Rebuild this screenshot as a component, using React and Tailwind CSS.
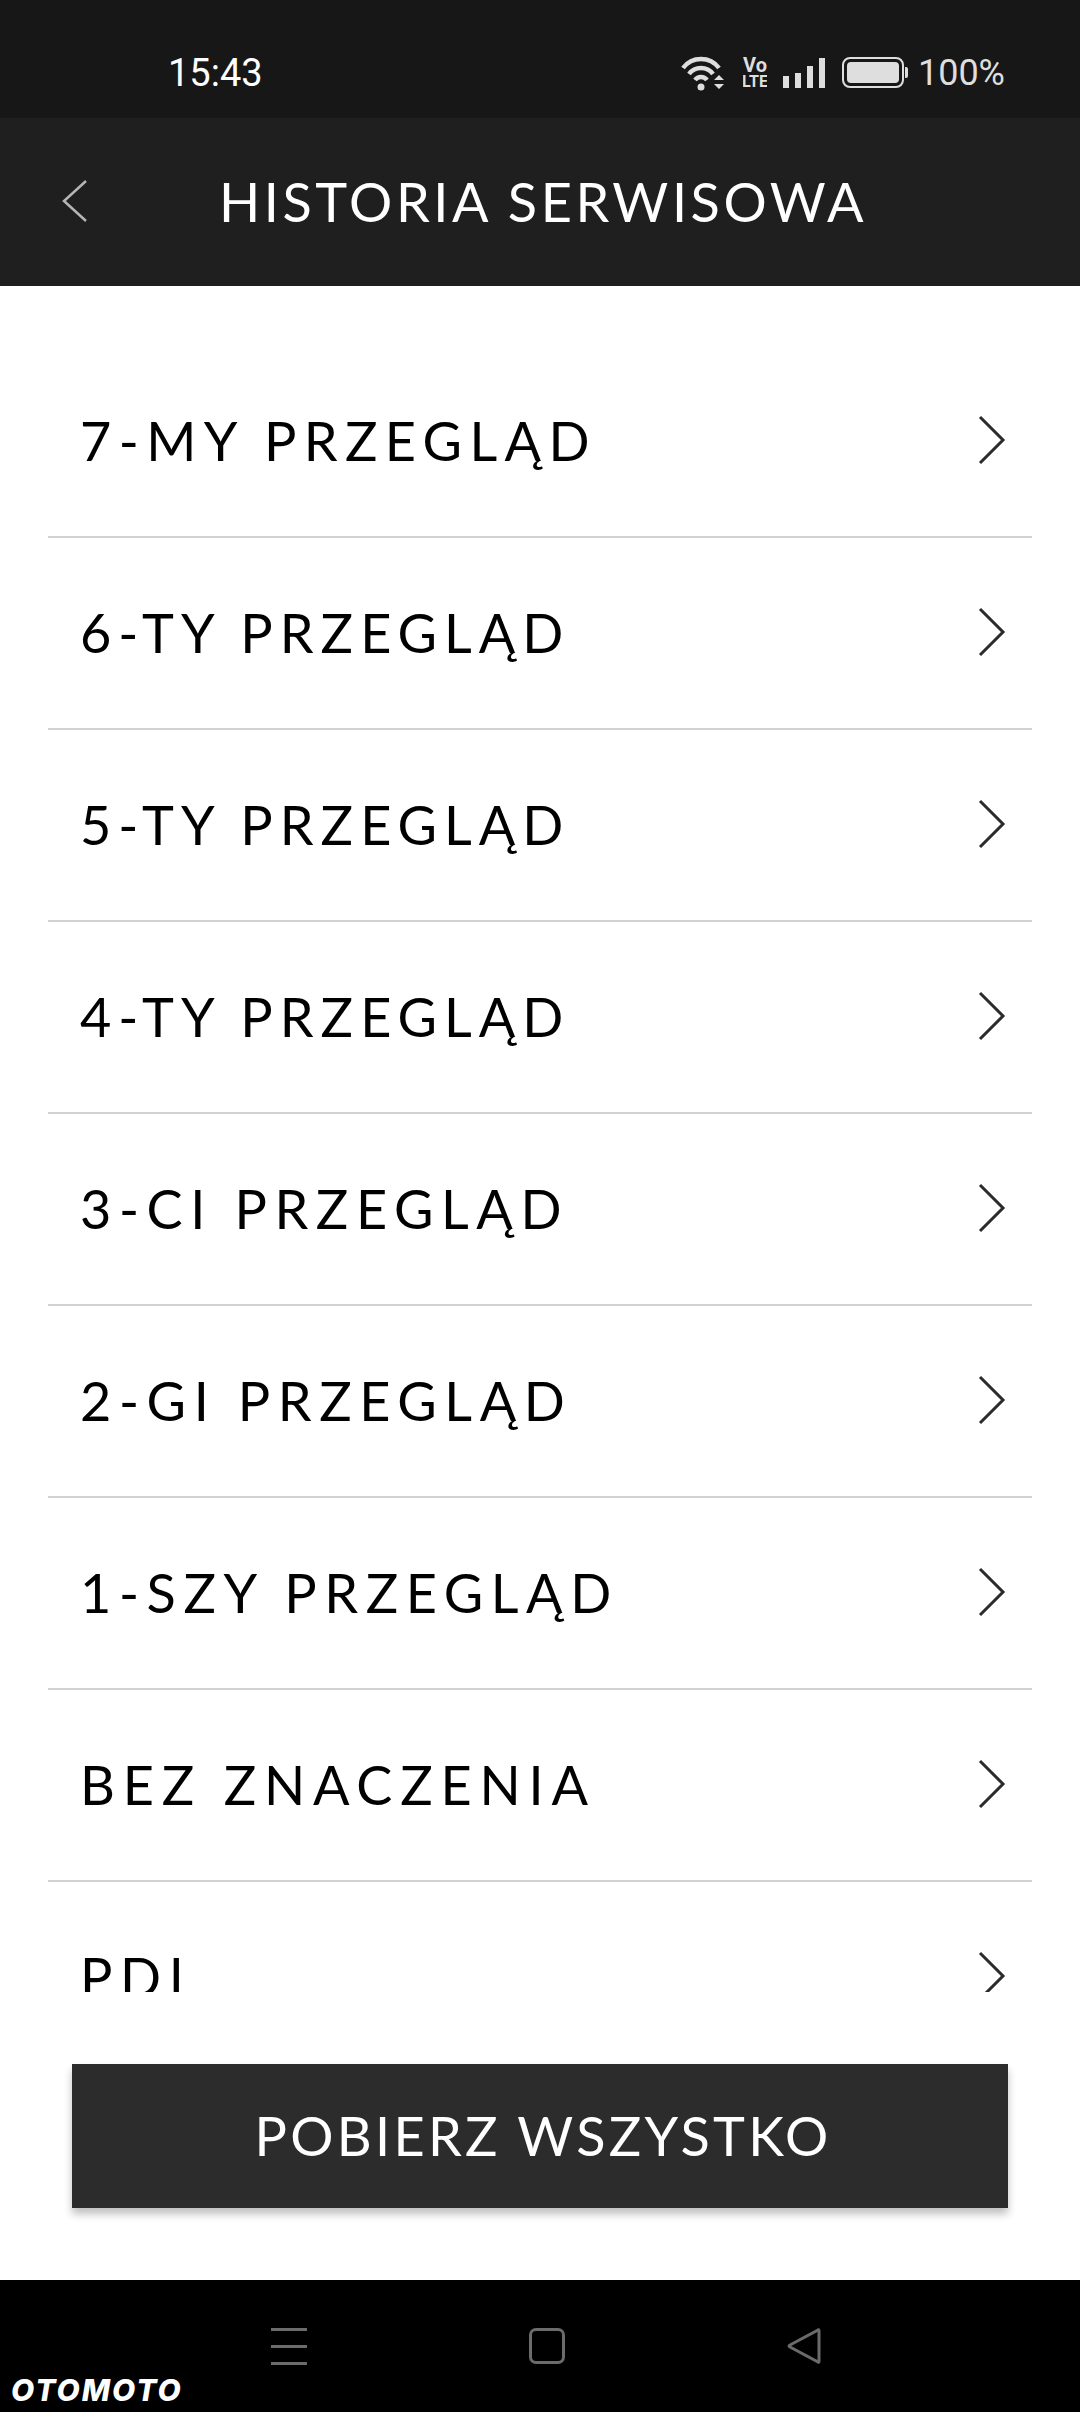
import React from "react";

const rows = [
    { label: "7-MY PRZEGLĄD", tracking: "tracking-[7.4px]" },
    { label: "6-TY PRZEGLĄD", tracking: "tracking-[7px]" },
    { label: "5-TY PRZEGLĄD", tracking: "tracking-[7px]" },
    { label: "4-TY PRZEGLĄD", tracking: "tracking-[7px]" },
    { label: "3-CI PRZEGLĄD", tracking: "tracking-[7.6px]" },
    { label: "2-GI PRZEGLĄD", tracking: "tracking-[7.6px]" },
    { label: "1-SZY PRZEGLĄD", tracking: "tracking-[7.6px]" },
    { label: "BEZ ZNACZENIA", tracking: "tracking-[7.8px]" },
    { label: "PDI", tracking: "tracking-[7.6px]" },
];

function Chevron() {
    return (
        <svg width="28" height="50" viewBox="0 0 28 50" fill="none" className="shrink-0 mb-[2px]">
            <path d="M2 2 L25 25 L2 48" stroke="#2b2b2b" strokeWidth="3" />
        </svg>
    );
}

function StatusIcons() {
    return (
        <div className="flex items-center text-[#dedede]">
            {/* wifi */}
            <svg width="44" height="36" viewBox="0 0 44 36" fill="none" className="mr-[18px]">
                <path d="M2 13 C11 1 29 1 38 13" stroke="#dedede" strokeWidth="4.5" />
                <path d="M8 19 C14 11 26 11 32 19" stroke="#dedede" strokeWidth="4.5" />
                <path d="M14 25 C17 21 23 21 26 25" stroke="#dedede" strokeWidth="4.5" />
                <circle cx="20" cy="32" r="3.5" fill="#dedede" />
                <path d="M38 20 L43 25 H33 Z M33 29 H43 L38 34 Z" fill="#dedede" />
            </svg>
            {/* VoLTE */}
            <svg width="24" height="44" viewBox="0 0 24 44" className="mr-[16px] font-['Roboto'] font-bold">
                <text x="12" y="21" textAnchor="middle" fontSize="20" fill="#dedede">Vo</text>
                <text x="12" y="36" textAnchor="middle" fontSize="16" fill="#dedede">LTE</text>
            </svg>
            {/* signal */}
            <div className="flex items-end gap-[6px] h-[30px] mr-[17px]">
                <div className="w-[6px] h-[12px] bg-[#dedede]" />
                <div className="w-[6px] h-[15px] bg-[#dedede]" />
                <div className="w-[6px] h-[22px] bg-[#dedede]" />
                <div className="w-[6px] h-[30px] bg-[#dedede]" />
            </div>
            {/* battery */}
            <div className="flex items-center mr-[10px]">
                <div className="w-[62px] h-[31px] rounded-[8px] border-2 border-[#dedede] p-[3px]">
                    <div className="w-full h-full rounded-[4px] bg-[#dedede]" />
                </div>
                <div className="w-[3px] h-[11px] ml-[1px] rounded-r-[2px] bg-[#dedede]" />
            </div>
            <span className="font-['Roboto'] text-[36px] leading-none">100%</span>
        </div>
    );
}

function App() {
    return (
        <div className="relative w-[1080px] h-[2412px] flex flex-col overflow-hidden bg-white font-['Lato',sans-serif]">
            {/* Status bar */}
            <div className="h-[118px] shrink-0 bg-[#171717] flex items-center justify-between pl-[168px] pr-[75px] pt-[27px]">
                <span className="font-['Roboto'] text-[38px] leading-none text-white">15:43</span>
                <StatusIcons />
            </div>

            {/* Header */}
            <header className="relative h-[168px] shrink-0 bg-[#1f1f1f] flex items-center justify-center pl-[6px]">
                <svg width="26" height="42" viewBox="0 0 26 42" fill="none" className="absolute left-[62px] top-[62px]">
                    <path d="M24 1 L2 21 L24 41" stroke="#b5b5b5" strokeWidth="2.5" />
                </svg>
                <h1 className="text-[54px] leading-none text-white tracking-[3.6px]">HISTORIA SERWISOWA</h1>
            </header>

            {/* List */}
            <div className="h-[1706px] shrink-0 overflow-hidden pt-[60px] px-[48px]">
                {rows.map((row) => (
                    <div key={row.label} className="h-[192px] shrink-0 flex items-center justify-between border-b-2 border-[#d2d2d2] pl-[32px] pr-[26px]">
                        <span className={`text-[54px] leading-none text-black ${row.tracking}`}>{row.label}</span>
                        <Chevron />
                    </div>
                ))}
            </div>

            {/* Download button */}
            <div className="flex-1 px-[72px] pt-[72px]">
                <button className="w-full h-[144px] pl-[6px] bg-[#2c2c2c] text-white text-[54px] leading-none tracking-[3.3px] shadow-[0_6px_8px_rgba(0,0,0,0.25)]">
                    POBIERZ WSZYSTKO
                </button>
            </div>

            {/* Nav bar */}
            <div className="h-[132px] shrink-0 bg-black flex justify-center pt-[47px] pl-[12px]">
                <div className="w-[550px] h-[38px] flex items-center justify-between">
                    <div className="w-[36px] flex flex-col gap-[14px]">
                        <div className="h-[3px] bg-[#6b6b6b]" />
                        <div className="h-[3px] bg-[#6b6b6b]" />
                        <div className="h-[3px] bg-[#6b6b6b]" />
                    </div>
                    <div className="w-[36px] h-[36px] rounded-[7px] border-[3px] border-[#6b6b6b]" />
                    <svg width="34" height="38" viewBox="0 0 34 38" fill="none">
                        <path d="M31 3 Q32 2 32 4 V34 Q32 36 31 35 L3 20 Q1 19 3 18 Z" stroke="#6b6b6b" strokeWidth="3" />
                    </svg>
                </div>
            </div>

            {/* Watermark */}
            <span className="absolute left-[11px] top-[2372px] font-['Inter'] font-extrabold italic text-[30px] leading-[36px] tracking-[2px] text-white">OTOMOTO</span>
        </div>
    );
}

export default App;
